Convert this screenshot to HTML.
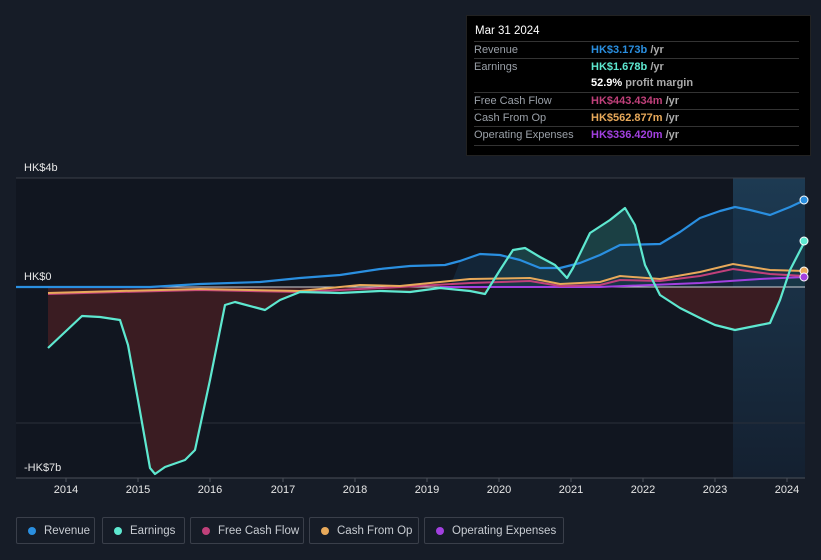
<!DOCTYPE html>
<html><head><meta charset="utf-8"><style>
html,body{margin:0;padding:0;background:#161c27;width:821px;height:560px;overflow:hidden;font-family:"Liberation Sans",sans-serif}
.tt{position:absolute;left:466px;top:15px;width:343px;height:139px;background:#000;border:1px solid #222}
.tt .h{position:absolute;left:8px;top:9px;color:#fff;font-size:11.5px}
.row{position:absolute;left:7px;width:325px;border-top:1px solid #333;font-size:11px;color:#9aa0a8;height:17px;line-height:17px}
.row span{position:absolute;left:117px;font-weight:bold}
.row i{font-style:normal;color:#aaa;font-weight:bold}
.leg{position:absolute;top:517px;height:27px;border:1px solid #3a3f4a;border-radius:2px;color:#c8ccd2;font-size:11.5px;line-height:27px;box-sizing:border-box;padding-left:27px}
.leg b{position:absolute;left:11px;top:9px;width:8px;height:8px;border-radius:50%}
.ax{position:absolute;top:484px;color:#e6e6e6;font-size:11px;width:40px;text-align:center}
</style></head><body>
<svg width="821" height="560" style="position:absolute;left:0;top:0">
<defs>
<clipPath id="a"><rect x="0" y="0" width="821" height="287"/></clipPath>
<clipPath id="b"><rect x="0" y="287" width="821" height="200"/></clipPath>
<linearGradient id="g" x1="0" x2="0" y1="0" y2="1"><stop offset="0" stop-color="#1d3a52"/><stop offset="1" stop-color="#142030"/></linearGradient>
</defs>
<rect x="16" y="178" width="789" height="300" fill="#111620"/>
<rect x="733" y="178" width="72" height="300" fill="url(#g)"/>
<line x1="16" y1="178" x2="805" y2="178" stroke="#3a3f48"/>
<line x1="16" y1="423" x2="805" y2="423" stroke="#2b303a"/>
<line x1="16" y1="478" x2="805" y2="478" stroke="#4a4f58"/>
<g id="e">
<polygon clip-path="url(#b)" fill="#3a1c22" points="48,287 48,348 65,332 82,316 100,317 120,320 128,345 138,400 150,468 155,474 165,467 185,460 195,450 210,380 225,305 235,302 265,310 280,300 300,292 340,293 380,291 410,292 440,288 470,291 485,294 500,270 513,250 525,248 540,257 555,265 567,278 573,268 590,233 610,220 625,208 635,225 645,265 660,295 680,308 700,318 715,325 735,330 755,326 770,323 780,300 790,270 805,241 805,287"/>
<polygon clip-path="url(#a)" fill="#1b4044" points="48,287 48,348 65,332 82,316 100,317 120,320 128,345 138,400 150,468 155,474 165,467 185,460 195,450 210,380 225,305 235,302 265,310 280,300 300,292 340,293 380,291 410,292 440,288 470,291 485,294 500,270 513,250 525,248 540,257 555,265 567,278 573,268 590,233 610,220 625,208 635,225 645,265 660,295 680,308 700,318 715,325 735,330 755,326 770,323 780,300 790,270 805,241 805,287"/>
</g>
<polygon fill="#163048" opacity="0.6" points="450,287 460,261 480,254 500,255 520,260 540,268 560,268 580,263 600,255 620,245 660,244 680,232 700,218 720,211 735,207 750,210 770,215 790,207 805,200 805,287"/>
<line x1="16" y1="287" x2="805" y2="287" stroke="#cfd3d8" stroke-width="1"/>
<polyline fill="none" stroke="#a240e0" stroke-width="2" points="440,287 600,287 700,283 760,279 805,277"/>
<polyline fill="none" stroke="#c0407a" stroke-width="2" points="48,294 120,292 200,290 300,292 400,287 470,283 530,281 560,286 600,285 620,280 660,281 700,276 733,269 770,274 805,276"/>
<polyline fill="none" stroke="#e8a95a" stroke-width="2" points="48,293 120,291 200,289 300,291 360,285 400,286 470,279 530,278 560,284 600,282 620,276 660,279 700,272 733,264 770,270 805,271"/>
<polyline fill="none" stroke="#2a8fe0" stroke-width="2.2" stroke-linejoin="round" points="16,287 150,287 200,284 260,282 300,278 340,275 380,269 410,266 445,265 460,261 480,254 500,255 520,260 540,268 560,268 580,263 600,255 620,245 660,244 680,232 700,218 720,211 735,207 750,210 770,215 790,207 805,200"/>
<polyline fill="none" stroke="#5ee8d0" stroke-width="2.2" stroke-linejoin="round" points="48,348 65,332 82,316 100,317 120,320 128,345 138,400 150,468 155,474 165,467 185,460 195,450 210,380 225,305 235,302 265,310 280,300 300,292 340,293 380,291 410,292 440,288 470,291 485,294 500,270 513,250 525,248 540,257 555,265 567,278 573,268 590,233 610,220 625,208 635,225 645,265 660,295 680,308 700,318 715,325 735,330 755,326 770,323 780,300 790,270 805,241"/>
<circle cx="804" cy="200" r="4" fill="#2a8fe0" stroke="#fff" stroke-width="1"/>
<circle cx="804" cy="241" r="4" fill="#5ee8d0" stroke="#fff" stroke-width="1"/>
<circle cx="804" cy="271" r="4" fill="#e8a95a" stroke="#fff" stroke-width="1"/>
<circle cx="804" cy="277" r="4" fill="#a240e0" stroke="#fff" stroke-width="1"/>
<g stroke="#4a4f58"><line x1="66" y1="478" x2="66" y2="482"/><line x1="138" y1="478" x2="138" y2="482"/><line x1="210" y1="478" x2="210" y2="482"/><line x1="283" y1="478" x2="283" y2="482"/><line x1="355" y1="478" x2="355" y2="482"/><line x1="427" y1="478" x2="427" y2="482"/><line x1="499" y1="478" x2="499" y2="482"/><line x1="571" y1="478" x2="571" y2="482"/><line x1="643" y1="478" x2="643" y2="482"/><line x1="715" y1="478" x2="715" y2="482"/><line x1="787" y1="478" x2="787" y2="482"/></g>
<text x="24" y="171" fill="#e6e6e6" font-size="11" font-family="Liberation Sans">HK$4b</text>
<text x="24" y="280" fill="#e6e6e6" font-size="11" font-family="Liberation Sans">HK$0</text>
<text x="24" y="471" fill="#e6e6e6" font-size="11" font-family="Liberation Sans">-HK$7b</text>
</svg>
<div class="ax" style="left:46px">2014</div><div class="ax" style="left:118px">2015</div><div class="ax" style="left:190px">2016</div><div class="ax" style="left:263px">2017</div><div class="ax" style="left:335px">2018</div><div class="ax" style="left:407px">2019</div><div class="ax" style="left:479px">2020</div><div class="ax" style="left:551px">2021</div><div class="ax" style="left:623px">2022</div><div class="ax" style="left:695px">2023</div><div class="ax" style="left:767px">2024</div>
<div class="tt">
<div class="h">Mar 31 2024</div>
<div class="row" style="top:25px">Revenue<span style="color:#2a8fe0">HK$3.173b <i>/yr</i></span></div>
<div class="row" style="top:42px">Earnings<span style="color:#5ee8d0">HK$1.678b <i>/yr</i></span></div>
<div class="row" style="top:59px;border-top:none"><span style="color:#fff">52.9% <i>profit margin</i></span></div>
<div class="row" style="top:76px">Free Cash Flow<span style="color:#c0407a">HK$443.434m <i>/yr</i></span></div>
<div class="row" style="top:93px">Cash From Op<span style="color:#e8a95a">HK$562.877m <i>/yr</i></span></div>
<div class="row" style="top:110px">Operating Expenses<span style="color:#a240e0">HK$336.420m <i>/yr</i></span></div>
<div class="row" style="top:129px;height:1px"></div>
</div>
<div class="leg" style="left:16px;width:79px"><b style="background:#2a8fe0"></b>Revenue</div>
<div class="leg" style="left:102px;width:83px"><b style="background:#5ee8d0"></b>Earnings</div>
<div class="leg" style="left:190px;width:114px"><b style="background:#c0407a"></b>Free Cash Flow</div>
<div class="leg" style="left:309px;width:110px"><b style="background:#e8a95a"></b>Cash From Op</div>
<div class="leg" style="left:424px;width:140px"><b style="background:#a240e0"></b>Operating Expenses</div>
</body></html>
